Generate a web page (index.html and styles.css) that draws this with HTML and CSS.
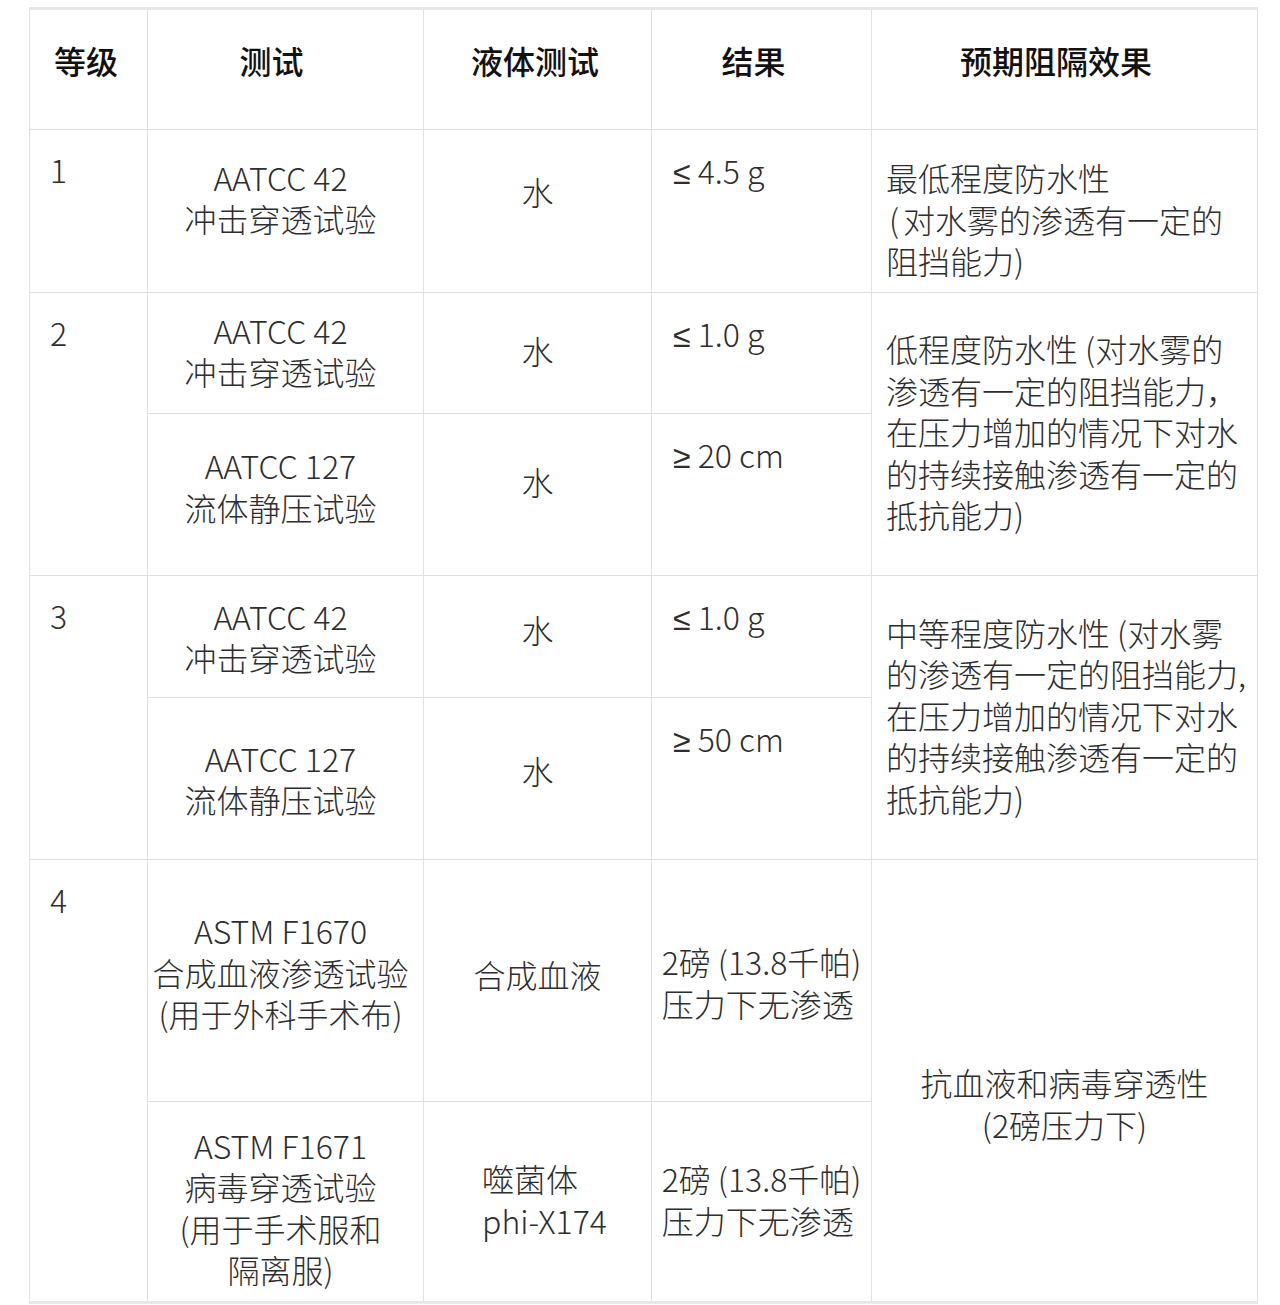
FILE: index.html
```html
<!DOCTYPE html>
<html lang="zh-CN">
<head>
<meta charset="utf-8">
<title>等级表</title>
<link rel="stylesheet" href="styles.css">
</head>
<body>
<table class="grid">
  <colgroup>
    <col class="c1"><col class="c2"><col class="c3"><col class="c4"><col class="c5">
  </colgroup>
  <thead>
    <tr class="r-head">
      <th class="hd-1">等级</th>
      <th class="hd-2">测试</th>
      <th class="hd-3">液体测试</th>
      <th class="hd-4">结果</th>
      <th class="hd-5">预期阻隔效果</th>
    </tr>
  </thead>
  <tbody>
    <tr class="r1">
      <td class="lvl">1</td>
      <td class="test pb22">AATCC 42<br>冲击穿透试验</td>
      <td class="liq pb34">水</td>
      <td class="res"><span class="sym">≤</span> 4.5 g</td>
      <td class="eff eff-top">最低程度防水性<br><span class="lp">(</span>对水雾的渗透有一定的<br>阻挡能力)</td>
    </tr>
    <tr class="r2a">
      <td class="lvl" rowspan="2">2</td>
      <td class="test">AATCC 42<br>冲击穿透试验</td>
      <td class="liq">水</td>
      <td class="res"><span class="sym">≤</span> 1.0 g</td>
      <td class="eff" rowspan="2">低程度防水性 (对水雾的<br>渗透有一定的阻挡能力，<br>在压力增加的情况下对水<br>的持续接触渗透有一定的<br>抵抗能力)</td>
    </tr>
    <tr class="r2b">
      <td class="test pb12">AATCC 127<br>流体静压试验</td>
      <td class="liq pb22">水</td>
      <td class="res"><span class="sym">≥</span> 20 cm</td>
    </tr>
    <tr class="r3a">
      <td class="lvl" rowspan="2">3</td>
      <td class="test pt5">AATCC 42<br>冲击穿透试验</td>
      <td class="liq pb10">水</td>
      <td class="res"><span class="sym">≤</span> 1.0 g</td>
      <td class="eff" rowspan="2">中等程度防水性 (对水雾<br>的渗透有一定的阻挡能力,<br>在压力增加的情况下对水<br>的持续接触渗透有一定的<br>抵抗能力)</td>
    </tr>
    <tr class="r3b">
      <td class="test pt5">AATCC 127<br>流体静压试验</td>
      <td class="liq pb12">水</td>
      <td class="res"><span class="sym">≥</span> 50 cm</td>
    </tr>
    <tr class="r4a">
      <td class="lvl" rowspan="2">4</td>
      <td class="test pb12">ASTM F1670<br>合成血液渗透试验<br>(用于外科手术布)</td>
      <td class="liq pb8">合成血液</td>
      <td class="res-c pt8"><span class="blk">2磅 (13.8千帕)<br>压力下无渗透</span></td>
      <td class="eff-c pt50" rowspan="2">抗血液和病毒穿透性<br>(2磅压力下)</td>
    </tr>
    <tr class="r4b">
      <td class="test pt16">ASTM F1671<br>病毒穿透试验<br>(用于手术服和<br>隔离服)</td>
      <td class="liq phage"><span class="blk">噬菌体<br>phi-X174</span></td>
      <td class="res-c"><span class="blk">2磅 (13.8千帕)<br>压力下无渗透</span></td>
    </tr>
  </tbody>
</table>
</body>
</html>
```
FILE: styles.css
```css
html, body {
  background: #ffffff;
}
body {
  margin: 7px 0 0 29px;
  font-family: "Noto Sans CJK SC", "Noto Sans", sans-serif;
  font-weight: 300;
  color: #2e2e2e;
  font-size: 32px;
  line-height: 41.5px;
}
.grid {
  width: 1228px;
  table-layout: fixed;
  border-collapse: collapse;
  border-top: 3px solid #e6e7e9;
  border-bottom: 3px solid #e6e7e9;
}
.c1 { width: 118px; }
.c2 { width: 276px; }
.c3 { width: 228px; }
.c4 { width: 220px; }
.c5 { width: 386px; }

.grid th,
.grid td {
  border: 1px solid #dfe0e2;
  padding: 0 0 4px 0;
  white-space: nowrap;
}
.grid th {
  font-weight: 500;
  color: #111;
  text-align: center;
  vertical-align: middle;
  padding-bottom: 18px;
}
.grid th.hd-1 { padding-right: 5px; }
.grid th.hd-2 { padding-right: 28px; }
.grid th.hd-3 { padding-right: 5px; }
.grid th.hd-4 { padding-right: 16px; }
.grid th.hd-5 { padding-right: 17px; }

.r-head { height: 121px; }
.r1 { height: 163px; }
.r2a { height: 121px; }
.r2b { height: 162px; }
.r3a { height: 122px; }
.r3b { height: 162px; }
.r4a { height: 242px; }
.r4b { height: 201px; }

.grid td.lvl {
  vertical-align: top;
  padding: 19px 0 0 20px;
}
.grid td.test {
  text-align: center;
  vertical-align: middle;
  padding-right: 10px;
}
.liq {
  text-align: center;
  vertical-align: middle;
}
.grid td.phage {
  padding-left: 14px;
}
.grid td.res {
  vertical-align: top;
  padding: 20px 0 0 21px;
}
.sym {
  font-family: "Noto Sans", "DejaVu Sans", sans-serif;
  font-weight: 300;
}
.res-c {
  text-align: center;
  vertical-align: middle;
}
.blk {
  display: inline-block;
  text-align: left;
}
.grid td.eff {
  vertical-align: middle;
  padding-left: 14px;
}
.grid td.eff-top {
  vertical-align: top;
  padding-top: 27px;
}
.lp {
  margin-left: 3px;
  margin-right: 4px;
}
.eff-c {
  text-align: center;
  vertical-align: middle;
}

.grid td.pb8 { padding-bottom: 12px; }
.grid td.pb10 { padding-bottom: 14px; }
.grid td.pb12 { padding-bottom: 16px; }
.grid td.pb22 { padding-bottom: 26px; }
.grid td.pb34 { padding-bottom: 38px; }
.grid td.pt5 { padding-top: 5px; }
.grid td.pt8 { padding-top: 8px; }
.grid td.pt16 { padding-top: 16px; }
.grid td.pt50 { padding-top: 50px; }
```
